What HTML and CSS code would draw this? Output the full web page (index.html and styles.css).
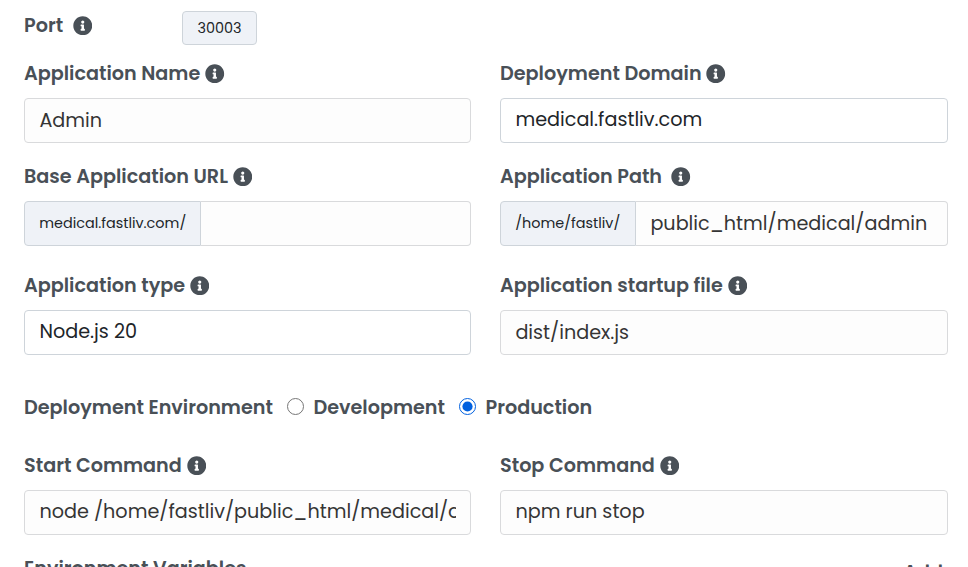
FILE: index.html
```
<!DOCTYPE html>
<html lang="en">
<head>
<meta charset="utf-8">
<title>Application Settings</title>
<link rel="stylesheet" href="styles.css">
</head>
<body>
<svg class="sprite" aria-hidden="true">
  <symbol id="info" viewBox="0 0 512 512">
    <path d="M256 8C119.043 8 8 119.083 8 256c0 136.997 111.043 248 248 248s248-111.003 248-248C504 119.083 392.957 8 256 8zm0 110c23.196 0 42 18.804 42 42s-18.804 42-42 42-42-18.804-42-42 18.804-42 42-42zm56 254c0 6.627-5.373 12-12 12h-88c-6.627 0-12-5.373-12-12v-24c0-6.627 5.373-12 12-12h12v-64h-12c-6.627 0-12-5.373-12-12v-24c0-6.627 5.373-12 12-12h64c6.627 0 12 5.373 12 12v100h12c6.627 0 12 5.373 12 12v24z"/>
  </symbol>
</svg>
<form class="settings">
  <div class="port-row">
    <div class="label label-spaced port-label"><span>Port</span><svg class="icon"><use href="#info"/></svg></div>
    <span class="port-value">30003</span>
  </div>

  <div class="row row-name">
    <div class="field">
      <label class="label" for="name"><span>Application Name</span><svg class="icon"><use href="#info"/></svg></label>
      <input class="control muted low" id="name" type="text" value="Admin" readonly>
    </div>
    <div class="field">
      <label class="label" for="domain"><span>Deployment Domain</span><svg class="icon"><use href="#info"/></svg></label>
      <input class="control" id="domain" type="text" value="medical.fastliv.com">
    </div>
  </div>

  <div class="row row-url">
    <div class="field">
      <label class="label" for="url"><span>Base Application URL</span><svg class="icon"><use href="#info"/></svg></label>
      <div class="group">
        <span class="prefix p-url">medical.fastliv.com/</span>
        <input class="control muted" id="url" type="text" readonly>
      </div>
    </div>
    <div class="field">
      <label class="label label-spaced" for="path"><span>Application Path</span><svg class="icon"><use href="#info"/></svg></label>
      <div class="group">
        <span class="prefix p-path">/home/fastliv/</span>
        <input class="control muted low" id="path" type="text" value="public_html/medical/admin" readonly>
      </div>
    </div>
  </div>

  <div class="row row-type">
    <div class="field">
      <label class="label" for="type"><span>Application type</span><svg class="icon"><use href="#info"/></svg></label>
      <input class="control" id="type" type="text" value="Node.js 20">
    </div>
    <div class="field">
      <label class="label" for="startup"><span>Application startup file</span><svg class="icon"><use href="#info"/></svg></label>
      <input class="control muted low" id="startup" type="text" value="dist/index.js" readonly>
    </div>
  </div>

  <div class="environment">
    <span>Deployment Environment</span>
    <input class="radio" type="radio" name="env" id="dev">
    <label for="dev">Development</label>
    <input class="radio" type="radio" name="env" id="prod" checked>
    <label for="prod">Production</label>
  </div>

  <div class="row row-command">
    <div class="field">
      <label class="label" for="start"><span>Start Command</span><svg class="icon"><use href="#info"/></svg></label>
      <input class="control muted" id="start" type="text" value="node /home/fastliv/public_html/medical/admin/dist/index.js" readonly>
    </div>
    <div class="field">
      <label class="label" for="stop"><span>Stop Command</span><svg class="icon"><use href="#info"/></svg></label>
      <input class="control muted" id="stop" type="text" value="npm run stop" readonly>
    </div>
  </div>

  <div class="variables">
    <span>Environment Variables</span>
    <span class="add">Add</span>
  </div>
</form>
</body>
</html>
```
FILE: styles.css
```
* { box-sizing: border-box; }

body {
  margin: 0;
  height: 567px;
  overflow: hidden;
  background: #fff;
  color: #495057;
  font: 600 19.2px/30px Poppins, Inter, sans-serif;
}

.sprite { display: none; }

.settings { padding: 11px 20px 0 24px; }

.port-row { display: flex; height: 34px; }
.port-label { width: 158px; margin-top: -1px; }
.port-value {
  width: 75px;
  height: 34px;
  border: 1px solid #ced4da;
  border-radius: 4px;
  background: #eff2f7;
  color: #212529;
  font-size: 14.4px;
  font-weight: 400;
  line-height: 32px;
  text-align: center;
}

.row {
  display: grid;
  grid-template-columns: 447px 448px;
  column-gap: 29px;
}
.row-name { margin-top: 13px; }
.row-url { margin-top: 18px; }
.row-type { margin-top: 24px; }
.row-command { margin-top: 28px; }

.label {
  display: flex;
  align-items: center;
  gap: 4.8px;
  height: 30px;
  line-height: 32px;
  white-space: nowrap;
}
.label-spaced { gap: 9.4px; }
.label span { padding-top: 1px; }
.field .label { margin-bottom: 10px; }

.icon { width: 19.5px; height: 19.5px; margin-top: 0.8px; fill: #495057; flex: none; }

.control {
  display: block;
  width: 100%;
  min-width: 0;
  height: 45px;
  padding: 0 14.4px 3px;
  border: 1px solid #ced4da;
  border-radius: 4px;
  background: #fff;
  color: #212529;
  font: 400 19.2px/30px Poppins, Inter, sans-serif;
  outline: none;
}
.muted {
  border-color: #d9dadc;
  background: #fdfdfd;
  color: #353535;
}
.low { padding-bottom: 1px; }

.group { display: flex; }
.group .control {
  flex: 1;
  width: auto;
  border-left: 0;
  border-radius: 0 4px 4px 0;
}
.prefix {
  flex: none;
  height: 45px;
  padding-left: 14.2px;
  border: 1px solid #ced4da;
  border-radius: 4px 0 0 4px;
  background: #eff2f7;
  color: #212529;
  font-size: 14.4px;
  font-weight: 400;
  line-height: 42px;
}
.p-url { width: 177px; }
.p-path { width: 136px; }

.environment {
  display: flex;
  align-items: center;
  height: 30px;
  margin-top: 37px;
  line-height: 32px;
  white-space: nowrap;
}
.environment span,
.environment label { padding-top: 1px; }
.radio { width: 17px; height: 17px; margin: -1px 9.5px 0 14px; accent-color: #0060df; flex: none; }

.variables {
  display: flex;
  justify-content: space-between;
  height: 30px;
  margin-top: 18px;
  padding-right: 5px;
  line-height: 32px;
}
.add { margin-top: 4px; }
```
